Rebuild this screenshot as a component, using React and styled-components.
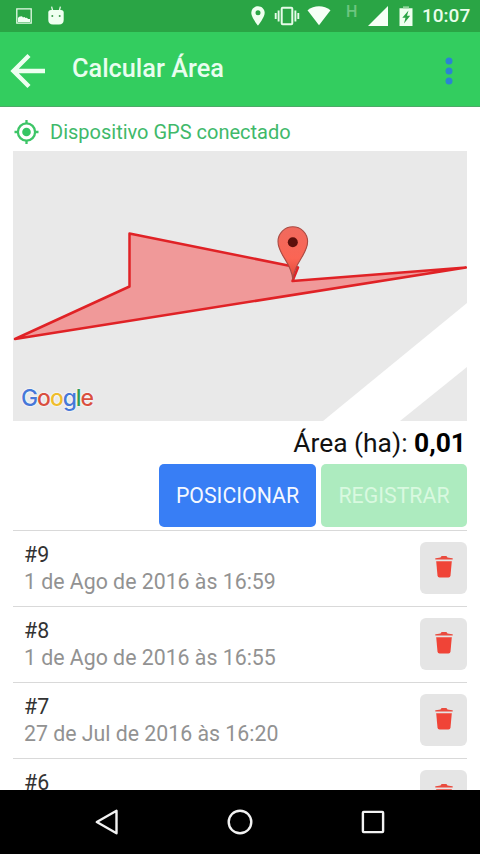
import React, { useState } from "react";
import styled, { createGlobalStyle } from "styled-components";

const initialAreas = [
  { id: 9, date: "1 de Ago de 2016 às 16:59" },
  { id: 8, date: "1 de Ago de 2016 às 16:55" },
  { id: 7, date: "27 de Jul de 2016 às 16:20" },
  { id: 6, date: "" },
];

const googleLetters = [
  { letter: "G", color: "#4678d8" },
  { letter: "o", color: "#d9503f" },
  { letter: "o", color: "#efbd2c" },
  { letter: "g", color: "#4678d8" },
  { letter: "l", color: "#2f9c57" },
  { letter: "e", color: "#d9503f" },
];

function StatusIcons() {
  return (
    <StatusBar>
      <StatusGroup $gap='16px'>
        <svg width='16' height='16' viewBox='0 0 16 16'>
          <path d='M.8.8h14.4v14.4H.8z' fill='none' stroke='#e6fbe8' strokeWidth='1.3' />
          <path d='M2 14v-4q1-2 2.500-1.500 1.500-.8 2.500 1 1.500-1 2.500.5 1.500-.6 2.500 1H14v3z' fill='#f2fff3' />
        </svg>
        <AndroidHead width='16' height='19' viewBox='0 0 16 19'>
          <path d='M4.6 4.5 3.6.6M11.4 4.5l1-3.9' stroke='#e6fbe8' strokeWidth='1.3' />
          <path
            d='M.3 6.500Q.3 4 3 4h10q2.700 0 2.700 2.500v7.300q0 4.700-4.700 4.700H5Q.3 18.500.3 13.800z'
            fill='#effff0'
          />
          <circle cx='4.3' cy='10' r='1' fill='#3c9a4b' />
          <circle cx='11.700' cy='10' r='1' fill='#3c9a4b' />
        </AndroidHead>
      </StatusGroup>
      <StatusGroup $gap='0'>
        <StatusSlot $right='9px'>
          <svg width='14' height='20' viewBox='0 0 14 20'>
            <path
              fillRule='evenodd'
              d='M7 .2C3.200.2.3 3.100.3 6.800.3 11.500 7 19.600 7 19.600s6.700-8.100 6.700-12.800C13.700 3.100 10.800.2 7 .2zm0 4.100a2.500 2.500 0 1 1 0 5 2.500 2.500 0 0 1 0-5z'
              fill='#effff0'
            />
          </svg>
        </StatusSlot>
        <StatusSlot $right='7px'>
          <svg width='26' height='20' viewBox='0 0 26 20'>
            <rect x='7.700' y='1.800' width='10.600' height='16.400' rx='1' fill='none' stroke='#e6fbe8' strokeWidth='2' />
            <path d='M4.600 4.500v11M21.400 4.500v11M1.700 7v6M24.300 7v6' stroke='#e6fbe8' strokeWidth='1.900' />
          </svg>
        </StatusSlot>
        <StatusSlot $right='15px'>
          <svg width='24' height='20' viewBox='0 0 24 20'>
            <path d='M.5 4.300C7-1 17-1 23.500 4.300L12 19.300z' fill='#f6fff6' />
          </svg>
        </StatusSlot>
        <NetworkType>H</NetworkType>
        <StatusSlot $right='11px'>
          <svg width='20' height='20' viewBox='0 0 20 20'>
            <path d='M20 0v20H0z' fill='#f6fff6' />
          </svg>
        </StatusSlot>
        <StatusSlot $right='9px'>
          <svg width='14' height='20' viewBox='0 0 14 20'>
            <path
              fillRule='evenodd'
              d='M.5 2.300H13.500V20H.5zM9.500 4.500 3.300 11.800h3.200l-1.500 5.700 6.200-7.700H8z'
              fill='#effff0'
            />
            <path d='M4 .3h6v2H4z' fill='#8fd39a' />
          </svg>
        </StatusSlot>
        <Clock>10:07</Clock>
      </StatusGroup>
    </StatusBar>
  );
}

function AreaMap() {
  return (
    <MapBox>
      <MapDrawing viewBox='13 151 454 270'>
        <defs>
          <linearGradient id='pinFill' x1='0' y1='0' x2='0' y2='1'>
            <stop offset='0' stopColor='#f06a5e' />
            <stop offset='.6' stopColor='#fb6554' />
            <stop offset='1' stopColor='#dd4435' />
          </linearGradient>
        </defs>
        <path d='M323 421 467 303v64l-67 54z' fill='#fff' />
        <path
          d='M129.500 233.500 298 267.500 292.500 281 466 267.500 15 339 129.500 286.500z'
          fill='#ff0000'
          fillOpacity='.34'
          stroke='#e02226'
          strokeWidth='2.500'
          strokeLinejoin='round'
        />
        <path
          d='M292.800 279.500C291.500 262 278 255 278 241.600a14.800 14.800 0 0 1 29.600 0C307.600 255 294.200 262 292.800 279.500z'
          fill='url(#pinFill)'
          stroke='#a94a42'
          strokeWidth='1.100'
        />
        <circle cx='292.800' cy='242.200' r='5' fill='#5d100c' />
      </MapDrawing>
      <GoogleMark>
        {googleLetters.map((item, index) => (
          <GoogleLetter key={index} $color={item.color}>
            {item.letter}
          </GoogleLetter>
        ))}
      </GoogleMark>
    </MapBox>
  );
}

function CalcularArea() {
  const [areas, setAreas] = useState(initialAreas);

  const onClickRemove = (id) => {
    setAreas(areas.filter((area) => area.id !== id));
  };

  return (
    <Screen>
      <GlobalStyle />
      <StatusIcons />
      <Header>
        <IconButton type='button' aria-label='Voltar'>
          <svg width='36' height='36' viewBox='0 0 36 36'>
            <path d='M35 18H4M19 2.500 3.500 18 19 33.500' fill='none' stroke='#edfff0' strokeWidth='4.400' />
          </svg>
        </IconButton>
        <HeaderTitle>Calcular Área</HeaderTitle>
        <IconButton type='button' aria-label='Menu'>
          <svg width='8' height='28' viewBox='0 0 8 28'>
            <g fill='#2b83d3'>
              <circle cx='4' cy='4' r='3.500' />
              <circle cx='4' cy='14' r='3.500' />
              <circle cx='4' cy='24' r='3.500' />
            </g>
          </svg>
        </IconButton>
      </Header>

      <Content>
        <GpsStatus>
          <svg width='26' height='26' viewBox='0 0 26 26'>
            <circle cx='13.500' cy='13' r='8.600' fill='none' stroke='#3dc567' strokeWidth='2.300' />
            <circle cx='13.500' cy='13' r='4.300' fill='#35c563' />
            <path d='M13.500 1v4M13.500 21v4M1.500 13h4M21.500 13h4' stroke='#3dc567' strokeWidth='2.300' />
          </svg>
          <GpsText>Dispositivo GPS conectado</GpsText>
        </GpsStatus>

        <AreaMap />

        <AreaTotal>
          Área (ha): <AreaValue>0,01</AreaValue>
        </AreaTotal>

        <Actions>
          <ActionButton type='button' $width='157px' $background='#387ef5' $color='#f4f8ff'>
            POSICIONAR
          </ActionButton>
          <ActionButton type='button' disabled $width='146px' $background='#adebbf' $color='#d9f9e0'>
            REGISTRAR
          </ActionButton>
        </Actions>

        <AreaList>
          {areas.map((area) => (
            <AreaItem key={area.id}>
              <AreaInfo>
                <AreaName>#{area.id}</AreaName>
                <AreaDate>{area.date}</AreaDate>
              </AreaInfo>
              <RemoveButton type='button' aria-label='Remover' onClick={() => onClickRemove(area.id)}>
                <svg width='18' height='23' viewBox='0 0 18 23'>
                  <path d='M.3 4.600V3.200Q2 2.800 5.500 2.400L6.600.9h4.800l1.100 1.500q3.500.4 5.200.8v1.400z' fill='#ea4b3e' />
                  <path d='M1.200 6.300h15.600L15.500 20.600q-.2 1.900-2 1.900h-9q-1.800 0-2-1.900z' fill='#f04437' />
                </svg>
              </RemoveButton>
            </AreaItem>
          ))}
        </AreaList>
      </Content>

      <NavigationBar>
        <svg width='24' height='26' viewBox='0 0 24 26'>
          <path d='M21.500 1.800v22.400L1.800 13z' fill='none' stroke='#f2f2f2' strokeWidth='2.400' strokeLinejoin='round' />
        </svg>
        <svg width='26' height='26' viewBox='0 0 26 26'>
          <circle cx='13' cy='13' r='11.300' fill='none' stroke='#f2f2f2' strokeWidth='2.400' />
        </svg>
        <svg width='24' height='26' viewBox='0 0 24 26'>
          <rect x='1.900' y='2.900' width='20.200' height='20.200' rx='.8' fill='none' stroke='#f2f2f2' strokeWidth='2.400' />
        </svg>
      </NavigationBar>
    </Screen>
  );
}

const GlobalStyle = createGlobalStyle`
  * {
    box-sizing: border-box;
  }

  body {
    margin: 0;
    background: #fff;
    font-family: Roboto, "Liberation Sans", sans-serif;
  }

  svg {
    display: block;
    flex: none;
  }

  button {
    font-family: inherit;
    border: 0;
    padding: 0;
  }
`;

const Screen = styled.div`
  display: flex;
  flex-direction: column;
  width: 480px;
  height: 854px;
  overflow: hidden;
  background: #fff;
`;

const StatusBar = styled.div`
  display: flex;
  flex: none;
  justify-content: space-between;
  align-items: center;
  height: 32px;
  padding: 0 10px 0 16px;
  background: #2aa545;
`;

const StatusGroup = styled.div`
  display: flex;
  align-items: center;
  gap: ${(props) => props.$gap};
`;

const AndroidHead = styled.svg`
  margin-bottom: 2px;
`;

const StatusSlot = styled.div`
  margin-right: ${(props) => props.$right};
`;

const NetworkType = styled.span`
  width: 11px;
  margin-right: 11px;
  padding-bottom: 9px;
  font-size: 16px;
  line-height: 16px;
  font-weight: 500;
  color: #6dc580;
`;

const Clock = styled.span`
  width: 48px;
  font-size: 19px;
  line-height: 32px;
  font-weight: 500;
  color: #e9fdeb;
  white-space: nowrap;
`;

const Header = styled.header`
  display: flex;
  flex: none;
  align-items: center;
  height: 75px;
  padding: 3px 27px 0 10px;
  background: #33cd5f;
  border-bottom: 1px solid #4da968;
`;

const HeaderTitle = styled.h1`
  flex: 1;
  margin: 0 0 3px 26px;
  font-size: 25.3px;
  line-height: 32px;
  font-weight: 500;
  color: #e9fdef;
`;

const IconButton = styled.button`
  background: transparent;
`;

const Content = styled.main`
  flex: 1;
  min-height: 0;
  overflow: hidden;
  padding: 0 13px;
`;

const GpsStatus = styled.div`
  display: flex;
  align-items: center;
  gap: 11px;
  height: 44px;
  padding-top: 6px;
`;

const GpsText = styled.span`
  font-size: 20px;
  line-height: 26px;
  color: #40b96a;
`;

const MapBox = styled.div`
  position: relative;
  height: 270px;
  background: #e9e9e9;
`;

const MapDrawing = styled.svg`
  width: 454px;
  height: 270px;
`;

const GoogleMark = styled.div`
  position: absolute;
  left: 8px;
  bottom: 9px;
  display: flex;
  font-family: Inter, sans-serif;
  font-size: 23px;
  line-height: 28px;
  font-weight: 500;
  letter-spacing: -1.1px;
  text-shadow: 0 0 2px #fff, 0 0 2px #fff;
`;

const GoogleLetter = styled.span`
  color: ${(props) => props.$color};
`;

const AreaTotal = styled.div`
  height: 43px;
  padding-right: 1px;
  font-size: 26.4px;
  line-height: 44px;
  text-align: right;
  color: #111;
`;

const AreaValue = styled.strong`
  font-weight: 700;
  color: #000;
`;

const Actions = styled.div`
  display: flex;
  justify-content: flex-end;
  gap: 5px;
  height: 66px;
`;

const ActionButton = styled.button`
  width: ${(props) => props.$width};
  height: 63px;
  border-radius: 5px;
  font-size: 21.3px;
  color: ${(props) => props.$color};
  background: ${(props) => props.$background};
`;

const AreaList = styled.ul`
  list-style: none;
  margin: 0;
  padding: 0;
`;

const AreaItem = styled.li`
  display: flex;
  justify-content: space-between;
  height: 76px;
  padding: 11px 0 0 11px;
  border-top: 1px solid #d9d9d9;
`;

const AreaInfo = styled.div`
  display: flex;
  flex-direction: column;
`;

const AreaName = styled.span`
  font-size: 21.3px;
  line-height: 26px;
  color: #333;
`;

const AreaDate = styled.span`
  font-size: 21.3px;
  line-height: 27px;
  color: #929292;
`;

const RemoveButton = styled.button`
  display: flex;
  justify-content: center;
  align-items: center;
  width: 47px;
  height: 52px;
  padding-bottom: 3px;
  border-radius: 6px;
  background: #e5e5e5;
`;

const NavigationBar = styled.nav`
  display: flex;
  flex: none;
  justify-content: space-between;
  align-items: center;
  height: 64px;
  padding: 0 95px;
  background: #000;
`;

export default CalcularArea;
